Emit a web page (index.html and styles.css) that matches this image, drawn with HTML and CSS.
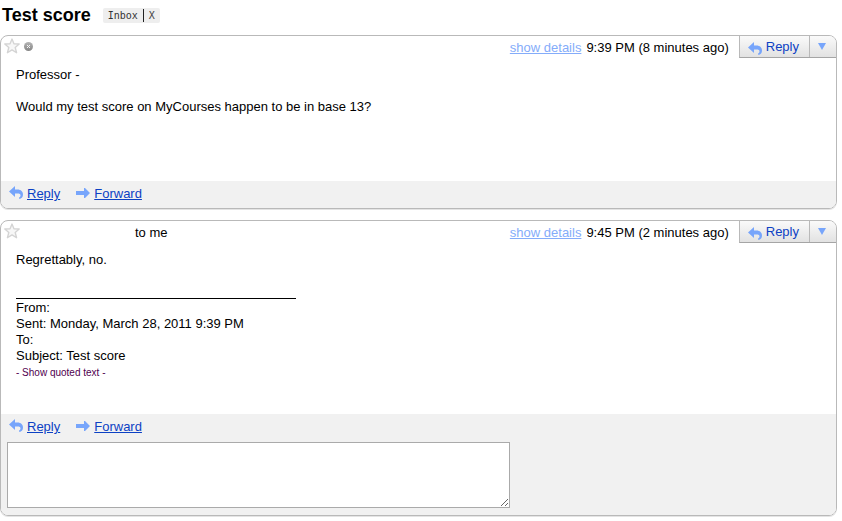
FILE: index.html
```html
<!DOCTYPE html>
<html lang="en">
<head>
    <meta charset="UTF-8">
    <meta name="viewport" content="width=device-width, initial-scale=1.0">
    <title>Test score</title>
    <link rel="stylesheet" href="styles.css">
</head>
<body>
    <!-- shared icons -->
    <svg class="icon-defs" width="0" height="0" aria-hidden="true">
        <linearGradient id="ball" x1="0" y1="0" x2="0" y2="1">
            <stop offset="0" stop-color="#b5b5b5"/>
            <stop offset="1" stop-color="#858585"/>
        </linearGradient>
        <symbol id="star" viewBox="0 0 14 14">
            <path d="M7 .9 L8.7 5.1 L13.3 5.3 L9.8 8.3 L11 12.9 L7 10.4 L3 12.9 L4.2 8.3 L.7 5.3 L5.3 5.1 Z" fill="#f7f7f7" stroke="#d4d4d4" stroke-width="1.2" stroke-linejoin="round"/>
        </symbol>
        <symbol id="reply" viewBox="0 0 14 13">
            <path d="M0 5.5 L6 0 V3.6 H8.5 C12 3.6 14 5.8 14 8.6 C14 11 12.8 12.7 10.2 13 V11.2 C11.2 10.9 11.5 10.2 11.5 9.4 C11.5 8 10.5 7.4 8.5 7.4 H6 V11 Z" fill="#77a5fb"/>
        </symbol>
        <symbol id="forward" viewBox="0 0 14 10">
            <path d="M0 3 H8 V0 H9 L14 5 L9 10 H8 V7 H0 Z" fill="#77a5fb"/>
        </symbol>
    </svg>

    <div class="subject">
        <h1>Test score</h1>
        <div class="label">
            <span>Inbox</span>
            <button type="button" aria-label="Remove label Inbox">X</button>
        </div>
    </div>

    <div class="message">
        <div class="header">
            <button type="button" class="star" aria-label="Star"><svg width="16" height="16"><use href="#star"/></svg></button>
            <svg class="status" width="9" height="9" viewBox="0 0 9 9">
                <circle cx="4.5" cy="4.5" r="4.5" fill="url(#ball)"/>
                <path d="M3 3 L6 6 M6 3 L3 6" stroke="#f4f4f4" stroke-width="1"/>
            </svg>
            <div class="info">
                <a class="details" href="#">show details</a>
                <span>9:39 PM (8 minutes ago)</span>
            </div>
            <div class="actions">
                <button type="button" class="reply"><svg width="14" height="13"><use href="#reply"/></svg>Reply</button>
                <button type="button" class="more" aria-label="More actions"><svg width="8" height="7" viewBox="0 0 8 7"><path d="M0 0 H8 L4 7 Z" fill="#77a5fb"/></svg></button>
            </div>
        </div>
        <div class="text">
            <p>Professor -</p>
            <p>Would my test score on MyCourses happen to be in base 13?</p>
        </div>
        <div class="footer">
            <div class="links">
                <svg width="14" height="13"><use href="#reply"/></svg><a href="#">Reply</a>
                <svg class="fwd" width="14" height="10"><use href="#forward"/></svg><a href="#">Forward</a>
            </div>
        </div>
    </div>

    <div class="message">
        <div class="header">
            <button type="button" class="star" aria-label="Star"><svg width="16" height="16"><use href="#star"/></svg></button>
            <span class="to">to me</span>
            <div class="info">
                <a class="details" href="#">show details</a>
                <span>9:45 PM (2 minutes ago)</span>
            </div>
            <div class="actions">
                <button type="button" class="reply"><svg width="14" height="13"><use href="#reply"/></svg>Reply</button>
                <button type="button" class="more" aria-label="More actions"><svg width="8" height="7" viewBox="0 0 8 7"><path d="M0 0 H8 L4 7 Z" fill="#77a5fb"/></svg></button>
            </div>
        </div>
        <div class="text">
            <p>Regrettably, no.</p>
            <hr>
            <div>From:</div>
            <div>Sent: Monday, March 28, 2011 9:39 PM</div>
            <div>To:</div>
            <div>Subject: Test score</div>
            <button type="button" class="quoted">- Show quoted text -</button>
        </div>
        <div class="footer">
            <div class="links">
                <svg width="14" height="13"><use href="#reply"/></svg><a href="#">Reply</a>
                <svg class="fwd" width="14" height="10"><use href="#forward"/></svg><a href="#">Forward</a>
            </div>
            <textarea aria-label="Reply message"></textarea>
        </div>
    </div>
</body>
</html>
```

FILE: styles.css
```css
* {
    box-sizing: border-box;
}
body {
    margin: 0;
    padding: 4px 5px 4px 0;
    background-color: #fff;
    color: #000;
    font-family: Arial, "Liberation Sans", sans-serif;
    font-size: 13px;
    line-height: 16px;
}
button {
    margin: 0;
    padding: 0;
    border: none;
    background: none;
    font: inherit;
    cursor: pointer;
}
a {
    color: #0c41c4;
}
svg {
    display: block;
}
.icon-defs {
    position: absolute;
}
.subject {
    display: flex;
    align-items: center;
    gap: 12px;
    height: 22px;
    padding-left: 2px;
    margin-bottom: 9px;
}
h1 {
    margin: 0;
    font-size: 18px;
    line-height: 22px;
}
.label {
    display: flex;
    align-items: center;
    height: 15px;
    padding: 0 5px;
    border-radius: 2px;
    background-color: #eee;
    color: #333;
    font-family: "DejaVu Sans Mono", monospace;
    font-size: 10px;
    line-height: 13px;
}
.label button {
    margin-left: 5px;
    padding-left: 5px;
    border-left: 1px solid #222;
    color: #444;
}
.message {
    margin-bottom: 11px;
    border: 1px solid #b9b9b9;
    border-radius: 8px;
    box-shadow: 0 1px 0 #e4e4e4;
    overflow: hidden;
}
.header {
    display: flex;
    align-items: center;
    height: 22px;
}
.star {
    margin-left: 3px;
}
.star svg {
    margin-bottom: 2px;
}
.status {
    margin-left: 4px;
    margin-bottom: 1px;
}
.to {
    margin-left: 115px;
    padding-top: 2px;
}
.info {
    display: flex;
    gap: 5px;
    margin-left: auto;
    margin-right: 10px;
    padding-top: 2px;
}
.details {
    color: #84acfa;
}
.actions {
    display: flex;
    align-self: stretch;
    border-left: 1px solid #b9b9b9;
    border-bottom: 1px solid #a5a5a5;
    background: linear-gradient(#fafafa, #e2e2e2);
}
.actions button {
    display: flex;
    align-items: center;
    color: #0c41c4;
}
.actions .reply {
    gap: 4px;
    padding: 0 10px 0 8px;
}
.actions .reply svg {
    margin-top: 4px;
}
.actions .more {
    justify-content: center;
    width: 27px;
    padding-right: 2px;
    border-left: 1px solid #b9b9b9;
}
.text {
    min-height: 123px;
    padding: 9px 15px 34px;
}
.text p {
    margin: 0 0 16px;
}
.text hr {
    width: 280px;
    height: 1px;
    margin: 30px 0 1px;
    border: none;
    background-color: #000;
}
.quoted {
    display: block;
    margin-top: 2px;
    color: #500050;
    font-size: 10px;
    line-height: 14px;
}
.footer {
    padding: 5px 6px 6px;
    background-color: #f1f1f1;
}
.links {
    display: flex;
    align-items: center;
    padding-left: 2px;
}
.links svg {
    margin-right: 4px;
    margin-bottom: 3px;
}
.links .fwd {
    margin-left: 16px;
}
textarea {
    display: block;
    width: 503px;
    max-width: 100%;
    height: 66px;
    margin: 7px 0 1px;
    padding: 2px;
    border: 1px solid #aaa;
    background-color: #fff;
    font: inherit;
    resize: both;
}
```
